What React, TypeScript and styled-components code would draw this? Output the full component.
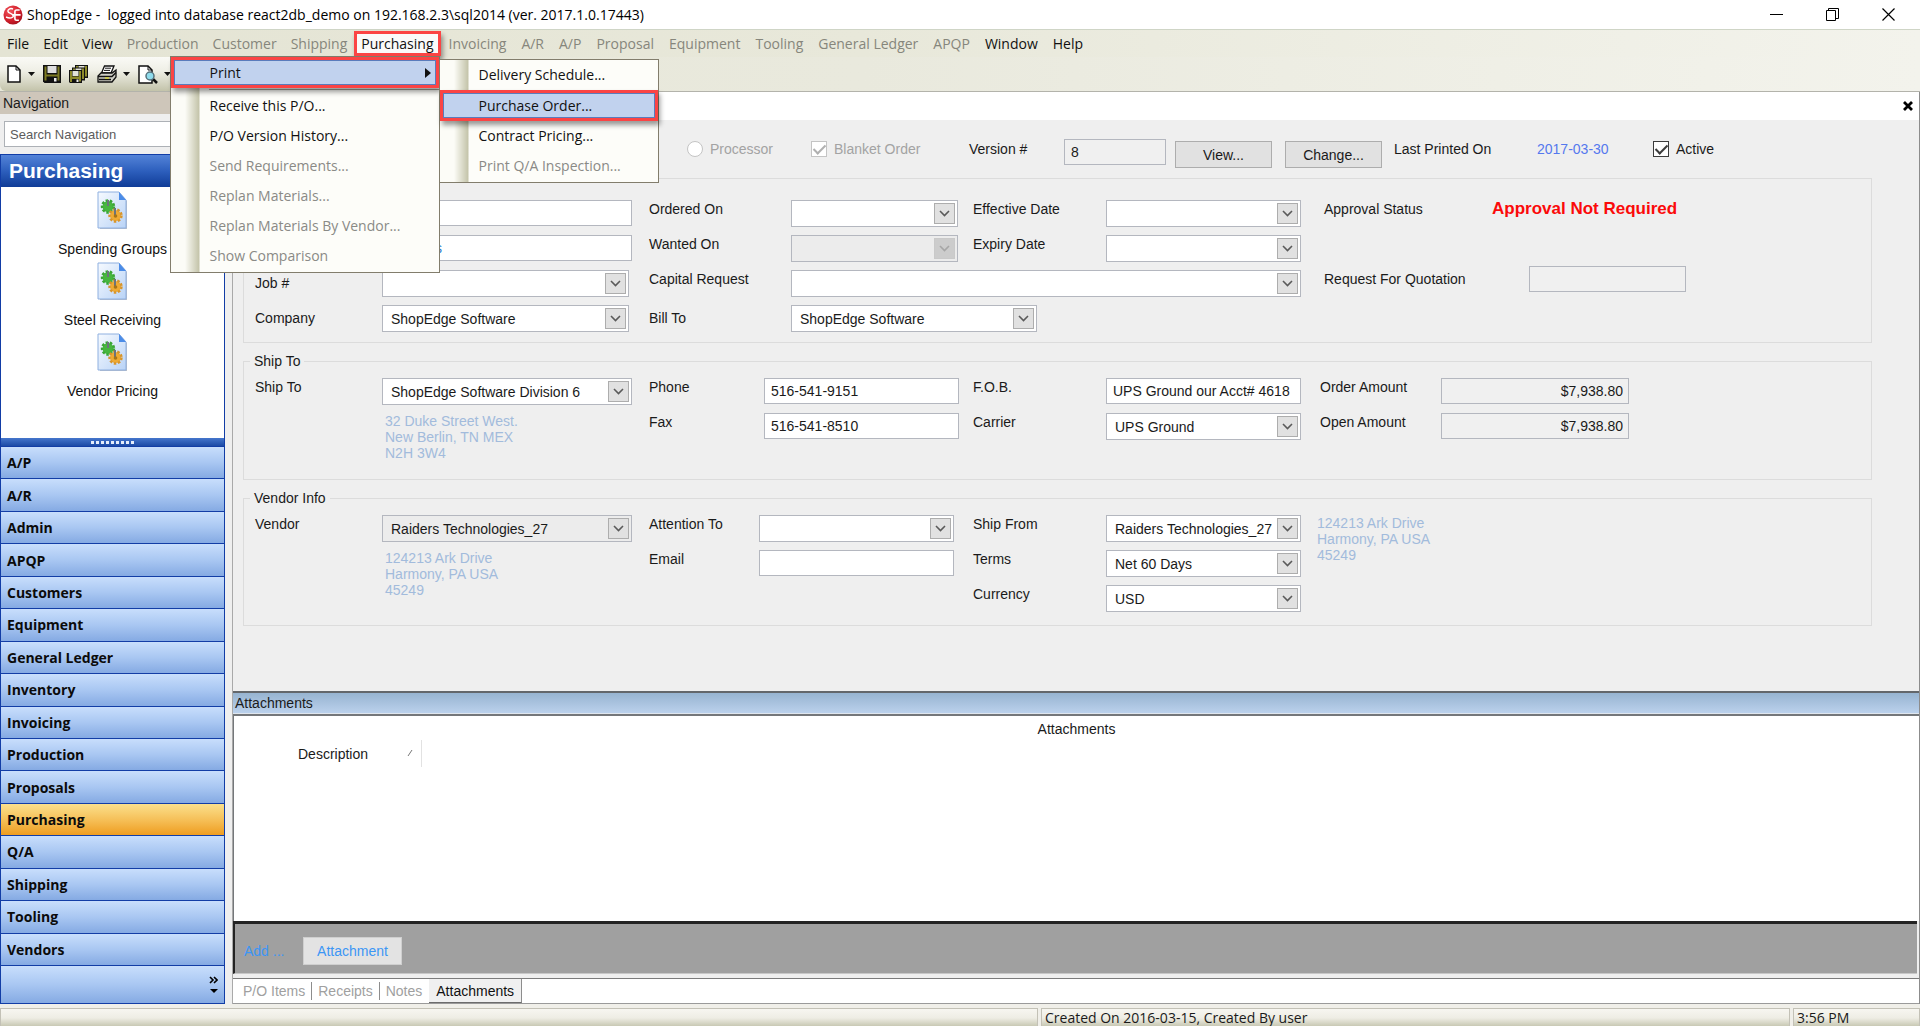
import React from "react";
import styled, { createGlobalStyle, css } from "styled-components";

const uiFont = `"Open Sans", "Noto Sans", sans-serif`;
const formFont = `"Liberation Sans", Arial, sans-serif`;

const GlobalStyle = createGlobalStyle`
  * { box-sizing: border-box; }
  body { margin: 0; background: #efefef; }
  button, input, select { font: inherit; color: inherit; border-radius: 0; margin: 0; }
`;

const Shell = styled.div`
  display: flex;
  flex-direction: column;
  min-height: 100vh;
  font: 14px/18px ${formFont};
  color: #1a1a1a;
  overflow-x: hidden;
`;

/* ---------- title bar ---------- */

const TitleBar = styled.header`
  display: flex;
  align-items: center;
  height: 29px;
  padding: 0 16px 0 3px;
  background: #fff;
  color: #000;
  font-family: ${uiFont};
`;

const Title = styled.h1`
  flex: 1;
  margin: 0 0 0 4px;
  font-size: 14px;
  line-height: 20px;
  font-weight: 400;
  white-space: pre;
`;

const WindowButtons = styled.div`
  display: flex;
  gap: 24px;
`;

const PlainButton = styled.button`
  display: flex;
  align-items: center;
  justify-content: center;
  padding: 0;
  border: 0;
  background: none;
`;

const WindowButton = styled(PlainButton)`
  width: 32px;
  height: 28px;
`;

/* ---------- menu bar ---------- */

const MenuBar = styled.nav`
  display: flex;
  align-items: stretch;
  height: 28px;
  padding: 1px 0;
  border-top: 1px solid #cfd5c6;
  background: linear-gradient(to right, #e4e4d4, #e8e8da 45%, #f3f3ec);
  font: 14px/20px ${uiFont};
`;

const MenuEntry = styled.button<{ $dim?: boolean }>`
  padding: 0 7px;
  border: 0;
  background: none;
  color: ${(p) => (p.$dim ? "#86867c" : "#111")};
  white-space: nowrap;
`;

const WideMenuEntry = styled(MenuEntry)`
  padding-left: 8px;
`;

const OpenEntry = styled.div`
  position: relative;
  display: flex;
  z-index: 5;
`;

const redBox = css`
  border: 3px solid #fb4444;
  box-shadow: 2px 4px 5px rgba(0, 0, 0, 0.4);
`;

const OpenEntryButton = styled(MenuEntry)`
  ${redBox};
  padding: 0 4px;
  background: #fafafa;
`;

const Popup = styled.ul`
  position: absolute;
  margin: 0;
  padding: 0 0 1px;
  list-style: none;
  border: 1px solid #827d6c;
  background: linear-gradient(
    to right,
    #fcfcf7 14px,
    #c4c4aa 28px,
    #fdfdf9 29px
  );
  color: #111;
`;

const PurchasingMenu = styled(Popup)`
  top: 25px;
  right: 1px;
  width: 270px;
`;

const PrintMenu = styled(Popup)`
  top: 2px;
  left: 100%;
  width: 220px;
`;

const MenuRow = styled.li`
  position: relative;
`;

const MenuCommand = styled.button<{ $dim?: boolean; $marked?: boolean }>`
  display: flex;
  align-items: center;
  justify-content: space-between;
  width: 100%;
  height: 30px;
  padding: 0 6px 0 39px;
  border: 0;
  background: none;
  text-align: left;
  white-space: nowrap;
  color: ${(p) => (p.$dim ? "#8a8a86" : "#111")};
  ${(p) =>
    p.$marked &&
    css`
      ${redBox};
      height: 31px;
      padding: 0 5px 0 36px;
      background: #c1d2ee;
      outline: 1px solid #5a7cbc;
      outline-offset: -4px;
    `}
`;

const MenuRule = styled.li`
  height: 1px;
  margin: 1px 0 1px 38px;
  background: #a5a293;
`;

/* ---------- tool bar ---------- */

const ToolArea = styled.div`
  display: flex;
  height: 35px;
  border-bottom: 1px solid #b3b3ab;
  background: linear-gradient(to right, #e7e7d8, #e9e9dd 45%, #f3f3ec);
`;

const ToolStrip = styled.div`
  display: flex;
  align-items: center;
  gap: 8px;
  width: 400px;
  padding-left: 6px;
  border-radius: 0 0 6px 6px;
  background: linear-gradient(#fafaf6, #efefe6 40%, #c3c3aa);
`;

const ToolButton = styled(PlainButton)`
  height: 26px;
  gap: 6px;
`;

/* ---------- workspace ---------- */

const Workspace = styled.div`
  display: flex;
  flex: 1;
  gap: 7px;
`;

const Sidebar = styled.aside`
  display: flex;
  flex-direction: column;
  width: 225px;
  flex: none;
`;

const SidebarCaption = styled.h2`
  margin: 0;
  padding: 2px 3px;
  background: #cec6ba;
  font-size: 14px;
  line-height: 18px;
  font-weight: 400;
`;

const SearchBox = styled.input`
  height: 26px;
  margin: 7px 2px 7px 4px;
  padding: 0 5px;
  border: 1px solid #adb1b6;
  background: #fff;
  font-size: 13px;
  &::placeholder {
    color: #5c5c5c;
    opacity: 1;
  }
`;

const NavPanel = styled.div`
  display: flex;
  flex: 1;
  flex-direction: column;
  border: 1px solid #123da6;
  background: #fff;
`;

const NavTitle = styled.h2`
  margin: 0;
  padding: 4px 8px;
  background: linear-gradient(#5383d8, #2d5fbd 50%, #103c97);
  color: #fff;
  font-size: 21px;
  line-height: 24px;
  font-weight: 700;
`;

const Shortcuts = styled.div`
  display: flex;
  flex-direction: column;
  align-items: center;
  height: 251px;
  padding-top: 4px;
`;

const Shortcut = styled.a`
  display: flex;
  flex-direction: column;
  align-items: center;
  gap: 10px;
  height: 71px;
  color: #111;
  text-decoration: none;
`;

const Grip = styled.div`
  display: flex;
  justify-content: center;
  align-items: center;
  gap: 2px;
  height: 8px;
  background: linear-gradient(#4576cc, #1c4aa6);
`;

const GripDot = styled.i`
  width: 3px;
  height: 3px;
  background: #e6eefb;
`;

const NavList = styled.div`
  display: flex;
  flex: 1;
  flex-direction: column;
`;

const NavItem = styled.button<{ $active?: boolean }>`
  flex: 1;
  padding: 1px 6px 0;
  border: 0;
  border-top: 1px solid #123da6;
  background: ${(p) =>
    p.$active
      ? "linear-gradient(#fbe08c, #f5bd54 55%, #ee9d20)"
      : "linear-gradient(#c8defc, #a9c7f2 50%, #85aae3)"};
  color: #0b0b0b;
  font: 700 14px/20px ${uiFont};
  text-align: left;
`;

const NavFooter = styled.div`
  display: flex;
  justify-content: flex-end;
  align-items: center;
  height: 38px;
  padding: 0 6px;
  border-top: 1px solid #123da6;
  background: linear-gradient(#c8defc, #a9c7f2 50%, #85aae3);
`;

/* ---------- document ---------- */

const Document = styled.main`
  display: flex;
  flex: 1;
  min-width: 0;
  flex-direction: column;
  border-left: 1px solid #a9a9a9;
  border-right: 1px solid #8c8c8c;
`;

const DocumentStrip = styled.div`
  display: flex;
  justify-content: flex-end;
  align-items: center;
  height: 28px;
  padding-right: 5px;
  background: #fff;
`;

const Form = styled.form`
  padding: 19px 47px 65px 10px;
`;

const HeaderRow = styled.div`
  display: grid;
  grid-template-columns: 124px 158px 95px 111px 110px 109px 143px 116px 1fr;
  align-items: start;
  height: 29px;
  padding-left: 444px;
  line-height: 20px;
`;

const Choice = styled.label<{ $dim?: boolean }>`
  display: flex;
  align-items: center;
  gap: 7px;
  color: ${(p) => (p.$dim ? "#a3a3a3" : "inherit")};
  white-space: nowrap;
`;

const Radio = styled.input`
  appearance: none;
  width: 16px;
  height: 16px;
  border: 1px solid #c4c4c4;
  border-radius: 50%;
  background: #fff;
`;

const Tick = styled.input`
  appearance: none;
  display: flex;
  justify-content: center;
  width: 16px;
  height: 16px;
  border: 1px solid #3c3c3c;
  background: #fff;
  color: #3c3c3c;
  &:checked::after {
    content: "";
    width: 5px;
    height: 10px;
    border: solid currentColor;
    border-width: 0 2px 2px 0;
    transform: rotate(45deg);
  }
  &:disabled {
    border-color: #c4c4c4;
    color: #b0b0b0;
  }
`;

const PushButton = styled.button`
  align-self: end;
  width: 97px;
  height: 27px;
  padding: 0;
  border: 1px solid #adadad;
  background: #e1e1e1;
`;

const DateText = styled.output`
  color: #5578ee;
`;

const Group = styled.fieldset`
  min-width: 0;
  margin: 10px 0 0;
  padding: 0;
  border: 1px solid #dcdcdc;
`;

const PlainGroup = styled.section`
  margin-top: 10px;
  padding: 12px 0 2px;
  border: 1px solid #dcdcdc;
`;

const GroupLegend = styled.legend`
  margin-left: 6px;
  padding: 0 4px;
  line-height: 16px;
`;

const FieldGrid = styled.div<{ $columns: string; $rows: string }>`
  display: grid;
  grid-template-columns: ${(p) => p.$columns};
  grid-template-rows: ${(p) => p.$rows};
  align-items: start;
  padding: 9px 0 0 11px;
`;

const FieldLabel = styled.label<{ $middle?: boolean }>`
  line-height: ${(p) => (p.$middle ? 26 : 18)}px;
  white-space: nowrap;
`;

const TextField = styled.input<{ $w: number; $indent?: number }>`
  width: ${(p) => p.$w}px;
  height: 26px;
  padding: 0 5px 0 ${(p) => p.$indent ?? 6}px;
  border: 1px solid #b4b7bf;
  background: #fff;
  outline: 0;
  &:read-only {
    background: #f0f0f0;
  }
`;

const AmountField = styled(TextField)`
  text-align: right;
`;

const LinkField = styled(TextField)`
  color: #2f7fd0;
`;

const PickerFrame = styled.div<{ $w: number; $gray?: boolean; $span?: number }>`
  display: flex;
  width: ${(p) => p.$w}px;
  height: 27px;
  padding: 2px;
  grid-column: span ${(p) => p.$span ?? 1};
  border: 1px solid #b4b7bf;
  background: ${(p) => (p.$gray ? "#ececec" : "#fff")};
`;

const PickerSelect = styled.select`
  appearance: none;
  flex: 1;
  min-width: 0;
  padding: 0 0 0 6px;
  border: 0;
  outline: 0;
  background: none;
  opacity: 1;
`;

const PickerArrow = styled.span<{ $dim?: boolean }>`
  display: flex;
  align-items: center;
  justify-content: center;
  width: 21px;
  border: 1px solid ${(p) => (p.$dim ? "#c9c9c9" : "#adadad")};
  background: ${(p) => (p.$dim ? "#cccccc" : "#e1e1e1")};
  color: ${(p) => (p.$dim ? "#a6a6a6" : "#5a5a5a")};
`;

const Address = styled.address<{ $column: number; $row: number }>`
  grid-column: ${(p) => p.$column};
  grid-row: ${(p) => p.$row} / span 2;
  padding-left: 3px;
  color: #a2bbdc;
  font-style: normal;
  line-height: 16px;
`;

const ApprovalPanel = styled.div`
  display: grid;
  grid-column: 7;
  grid-row: 1 / span 4;
  grid-template-columns: 168px 1fr;
  grid-template-rows: 66px 30px;
  align-items: start;
`;

const ApprovalText = styled.strong`
  color: #fb0a0a;
  font-size: 17px;
  line-height: 18px;
`;

const QuotationCell = styled.div`
  padding-left: 37px;
`;

/* ---------- attachments ---------- */

const PaneCaption = styled.h2`
  margin: 0;
  padding: 0 2px;
  border-top: 2px solid #63676b;
  border-bottom: 1px solid #dfe6ee;
  background: linear-gradient(#97b4d1, #bbd1ec);
  font-size: 14px;
  line-height: 20px;
  font-weight: 400;
`;

const ListArea = styled.div`
  flex: 1;
  border-top: 2px solid #74777a;
  border-left: 1px solid #74777a;
  background: #fff;
`;

const ListTable = styled.table`
  width: 100%;
  border-collapse: collapse;
  caption {
    padding: 4px 0 2px;
    line-height: 18px;
  }
  th {
    height: 27px;
    padding: 0;
    font-weight: 400;
    text-align: left;
  }
`;

const DescriptionHead = styled.th`
  width: 187px;
  border-right: 1px solid #e2e2e2;
`;

const SortHead = styled.div`
  display: flex;
  align-items: center;
  justify-content: space-between;
  padding: 0 8px 0 64px;
`;

const AddBar = styled.div`
  display: flex;
  align-items: center;
  gap: 16px;
  height: 53px;
  margin: 0 2px 4px 0;
  padding: 4px 0 0 9px;
  border-top: 3px solid #232323;
  border-left: 2px solid #232323;
  border-bottom: 1px solid #c8c8c8;
  background: #a0a0a0;
  color: #3c96f5;
`;

const AddLabel = styled.span`
  width: 43px;
`;

const AddButton = styled.button`
  width: 99px;
  height: 28px;
  padding: 0;
  border: 1px solid #cfcfcf;
  background: #e3e3e3;
`;

const Tabs = styled.div`
  display: flex;
  align-items: center;
  height: 26px;
  padding-left: 4px;
  border-top: 1px solid #7b7b7b;
  border-bottom: 1px solid #9a9a9a;
  background: #fff;
`;

const Tab = styled.button<{ $active?: boolean }>`
  height: 18px;
  padding: 0 6px;
  border: 0;
  border-right: 1px solid #8d8d8d;
  background: none;
  color: #a0a0a0;
  line-height: 18px;
  &:nth-last-child(2) {
    border-color: transparent;
  }
  ${(p) =>
    p.$active &&
    css`
      align-self: stretch;
      height: auto;
      padding: 0 7px;
      border-bottom: 1px solid #6c6c6c;
      background: #f0f0f0;
      color: #111;
    `}
`;

/* ---------- status bar ---------- */

const StatusBar = styled.footer`
  display: grid;
  grid-template-columns: 1fr 749px 127px;
  gap: 3px;
  height: 22px;
  padding-top: 4px;
  background: #f0efe9;
  font: 14px/18px ${uiFont};
`;

const StatusCell = styled.div`
  padding: 0 3px;
  border: solid #c3c1b6;
  border-width: 1px 1px 0 1px;
  background: linear-gradient(#f7f6f1, #eeede4 50%, #c4c4ae);
  white-space: nowrap;
`;

/* ---------- drawings ---------- */

const Logo = () => (
  <svg width="20" height="20" viewBox="0 0 21 21" aria-hidden="true">
    <defs>
      <radialGradient id="ball" cx="0.35" cy="0.3" r="0.8">
        <stop offset="0" stopColor="#f0545c" />
        <stop offset="0.6" stopColor="#d3202c" />
        <stop offset="1" stopColor="#9c0f1a" />
      </radialGradient>
    </defs>
    <circle cx="10.5" cy="10.5" r="10" fill="url(#ball)" />
    <path
      d="M10.500 4.200C7.500 3 4.600 4.600 5.200 6.800c.6 2.200 5 2 5.600 4.400.5 2.400-3.800 3.200-7.600 1.400"
      fill="none"
      stroke="#fff"
      strokeWidth="1.500"
    />
    <path
      d="M17.500 5.200h-3.200c-1.200 0-1.800.7-1.800 1.800v7.200c0 1.200.7 1.800 1.800 1.800h2.400M9.800 10.400h8.700"
      fill="none"
      stroke="#fff"
      strokeWidth="1.700"
    />
  </svg>
);

const Drop = () => (
  <svg width="7" height="4" viewBox="0 0 7 4" aria-hidden="true">
    <path d="M0 0h7L3.500 4z" fill="#111" />
  </svg>
);

const NewIcon = () => (
  <svg width="16" height="18" viewBox="0 0 16 18" aria-hidden="true">
    <path d="M2 1h8l4 4v12H2z" fill="#fff" stroke="#111" strokeWidth="1.500" />
    <path d="M10 1v4h4" fill="none" stroke="#111" />
  </svg>
);

const SaveIcon = () => (
  <svg width="18" height="18" viewBox="0 0 18 18" aria-hidden="true">
    <path d="M0 0h18v18H1.500L0 16.500z" fill="#111" />
    <path d="M1.500 1.500h2v8h11v-8h2v14h-2v-4h-11v4h-2z" fill="#7d7a22" />
    <path d="M4.500 1h9v7h-9z" fill="#dedede" />
    <path d="M11 13h2.500v3.500H11z" fill="#eee" />
  </svg>
);

const SaveAllIcon = () => (
  <svg width="20" height="18" viewBox="0 0 20 18" aria-hidden="true">
    {[
      [6, 0],
      [3, 2.5],
      [0, 5],
    ].map(([x, y]) => (
      <g key={x} transform={`translate(${x} ${y})`}>
        <path d="M0 0h13v13H1l-1-1z" fill="#111" />
        <path d="M1 1h2v5.500h7V1h2v10.500h-2V9H3v3H1z" fill="#8d8a2a" />
        <path d="M3.500 1h6v5h-6z" fill="#e2e2d8" />
        <path d="M7.500 9.500h2V12h-2z" fill="#eee" />
      </g>
    ))}
  </svg>
);

const PrinterIcon = () => (
  <svg width="20" height="18" viewBox="0 0 20 18" aria-hidden="true">
    <path d="M7.500 1h9.500l-3 7H4.500z" fill="#fff" stroke="#111" strokeWidth="1.300" />
    <path d="M8 3.200h6M7 5.400h6" stroke="#111" />
    <path d="M4 8h11l4-3v7l-4 5H1v-6z" fill="#cfcfc6" stroke="#111" strokeWidth="1.300" />
    <path d="M1 11.500h14l4-4M2 14.500h12" fill="none" stroke="#111" strokeWidth="1.500" />
    <path d="M8 13h4" stroke="#d6d33a" strokeWidth="1.500" />
  </svg>
);

const PreviewIcon = () => (
  <svg width="20" height="19" viewBox="0 0 20 19" aria-hidden="true">
    <path d="M1 1h9l4 4v13H1z" fill="#fff" stroke="#111" strokeWidth="1.500" />
    <path d="M10 1v4h4" fill="none" stroke="#111" />
    <path d="M15 14l4 4" stroke="#111" strokeWidth="2.500" />
    <circle cx="12" cy="11" r="4" fill="#8fdcec" stroke="#55707a" strokeWidth="1.500" />
  </svg>
);

const PageGearsIcon = () => (
  <svg width="31" height="39" viewBox="0 0 31 39" aria-hidden="true">
    <defs>
      <linearGradient id="sheet" x1="0" y1="0" x2="1" y2="1">
        <stop offset="0" stopColor="#f6faff" />
        <stop offset="1" stopColor="#b9d3f6" />
      </linearGradient>
    </defs>
    <path d="M3 2h20l7 8v28H3z" fill="#8a93a3" opacity="0.6" />
    <path d="M1 1h21l7 8v28H1z" fill="url(#sheet)" stroke="#8fb0e0" />
    <path d="M22 1l7 8h-7z" fill="#4b8ce8" />
    <circle cx="11" cy="15.500" r="5.500" fill="#46b63f" />
    <circle
      cx="11"
      cy="15.500"
      r="6"
      fill="none"
      stroke="#3aa634"
      strokeWidth="2.400"
      strokeDasharray="2.500 1.690"
    />
    <circle cx="18.500" cy="24.500" r="5.500" fill="#eeaa33" />
    <circle
      cx="18.500"
      cy="24.500"
      r="6"
      fill="none"
      stroke="#d8952a"
      strokeWidth="2.400"
      strokeDasharray="2.500 1.690"
    />
    <path d="M11 9v6M18 17v7" stroke="#6b747c" strokeWidth="2" />
    <circle cx="18.500" cy="25" r="1.800" fill="#a5741a" />
  </svg>
);

const Chevron = () => (
  <svg width="11" height="7" viewBox="0 0 11 7" aria-hidden="true">
    <path d="M1 1l4.500 4.500L10 1" fill="none" stroke="currentColor" strokeWidth="1.600" />
  </svg>
);

/* ---------- small composites ---------- */

type PickerProps = {
  id: string;
  w: number;
  value?: string;
  gray?: boolean;
  disabled?: boolean;
  span?: number;
};

const Picker = ({ id, w, value = "", gray, disabled, span }: PickerProps) => (
  <PickerFrame $w={w} $gray={gray || disabled} $span={span}>
    <PickerSelect id={id} defaultValue={value} disabled={disabled}>
      <option>{value}</option>
    </PickerSelect>
    <PickerArrow $dim={disabled}>
      <Chevron />
    </PickerArrow>
  </PickerFrame>
);

const leadingMenus: [string, boolean][] = [
  ["File", false],
  ["Edit", false],
  ["View", false],
  ["Production", true],
  ["Customer", true],
  ["Shipping", true],
];

const trailingMenus: [string, boolean][] = [
  ["Invoicing", true],
  ["A/R", true],
  ["A/P", true],
  ["Proposal", true],
  ["Equipment", true],
  ["Tooling", true],
  ["General Ledger", true],
  ["APQP", true],
  ["Window", false],
  ["Help", false],
];

const purchasingCommands: [string, boolean][] = [
  ["Receive this P/O...", false],
  ["P/O Version History...", false],
  ["Send Requirements...", true],
  ["Replan Materials...", true],
  ["Replan Materials By Vendor...", true],
  ["Show Comparison", true],
];

const modules = [
  "A/P",
  "A/R",
  "Admin",
  "APQP",
  "Customers",
  "Equipment",
  "General Ledger",
  "Inventory",
  "Invoicing",
  "Production",
  "Proposals",
  "Purchasing",
  "Q/A",
  "Shipping",
  "Tooling",
  "Vendors",
];

export default function App() {
  return (
    <Shell>
      <GlobalStyle />
      <TitleBar>
        <Logo />
        <Title>
          {"ShopEdge -  logged into database react2db_demo on 192.168.2.3\\sql2014 (ver. 2017.1.0.17443)"}
        </Title>
        <WindowButtons>
          <WindowButton aria-label="Minimize">
            <svg width="13" height="13" viewBox="0 0 13 13">
              <path d="M0 6.500h13" stroke="#000" />
            </svg>
          </WindowButton>
          <WindowButton aria-label="Restore">
            <svg width="13" height="13" viewBox="0 0 13 13">
              <path d="M.5 2.500h9v10h-9zM2.500 2.500v-2h10v10h-3" fill="none" stroke="#000" />
            </svg>
          </WindowButton>
          <WindowButton aria-label="Close">
            <svg width="13" height="13" viewBox="0 0 13 13">
              <path d="M.5.5l12 12M12.500.5l-12 12" stroke="#000" strokeWidth="1.200" />
            </svg>
          </WindowButton>
        </WindowButtons>
      </TitleBar>

      <MenuBar>
        {leadingMenus.map(([name, dim]) => (
          <MenuEntry key={name} $dim={dim}>
            {name}
          </MenuEntry>
        ))}
        <OpenEntry>
          <OpenEntryButton>Purchasing</OpenEntryButton>
          <PurchasingMenu>
            <MenuRow>
              <MenuCommand $marked>
                Print
                <svg width="6" height="10" viewBox="0 0 6 10" aria-hidden="true">
                  <path d="M0 0l6 5-6 5z" fill="#111" />
                </svg>
              </MenuCommand>
              <PrintMenu>
                <MenuRow>
                  <MenuCommand>Delivery Schedule...</MenuCommand>
                </MenuRow>
                <MenuRow>
                  <MenuCommand $marked>Purchase Order...</MenuCommand>
                </MenuRow>
                <MenuRow>
                  <MenuCommand>Contract Pricing...</MenuCommand>
                </MenuRow>
                <MenuRow>
                  <MenuCommand $dim>Print Q/A Inspection...</MenuCommand>
                </MenuRow>
              </PrintMenu>
            </MenuRow>
            <MenuRule />
            {purchasingCommands.map(([name, dim]) => (
              <MenuRow key={name}>
                <MenuCommand $dim={dim}>{name}</MenuCommand>
              </MenuRow>
            ))}
          </PurchasingMenu>
        </OpenEntry>
        {trailingMenus.map(([name, dim]) => (
          <WideMenuEntry key={name} $dim={dim}>
            {name}
          </WideMenuEntry>
        ))}
      </MenuBar>

      <ToolArea>
        <ToolStrip>
          <ToolButton aria-label="New">
            <NewIcon />
            <Drop />
          </ToolButton>
          <ToolButton aria-label="Save">
            <SaveIcon />
          </ToolButton>
          <ToolButton aria-label="Save all">
            <SaveAllIcon />
          </ToolButton>
          <ToolButton aria-label="Print">
            <PrinterIcon />
            <Drop />
          </ToolButton>
          <ToolButton aria-label="Preview">
            <PreviewIcon />
            <Drop />
          </ToolButton>
        </ToolStrip>
      </ToolArea>

      <Workspace>
        <Sidebar>
          <SidebarCaption>Navigation</SidebarCaption>
          <SearchBox placeholder="Search Navigation" aria-label="Search Navigation" />
          <NavPanel>
            <NavTitle>Purchasing</NavTitle>
            <Shortcuts>
              {["Spending Groups", "Steel Receiving", "Vendor Pricing"].map((name) => (
                <Shortcut key={name} href="#">
                  <PageGearsIcon />
                  {name}
                </Shortcut>
              ))}
            </Shortcuts>
            <Grip>
              {Array.from({ length: 9 }, (_, i) => (
                <GripDot key={i} />
              ))}
            </Grip>
            <NavList>
              {modules.map((name) => (
                <NavItem key={name} $active={name === "Purchasing"}>
                  {name}
                </NavItem>
              ))}
            </NavList>
            <NavFooter>
              <PlainButton aria-label="Configure buttons">
                <svg width="9" height="18" viewBox="0 0 9 18">
                  <path d="M1 1l3 3-3 3M5 1l3 3-3 3" fill="none" stroke="#000" strokeWidth="1.600" />
                  <path d="M1 13h8l-4 4z" fill="#000" />
                </svg>
              </PlainButton>
            </NavFooter>
          </NavPanel>
        </Sidebar>

        <Document>
          <DocumentStrip>
            <PlainButton aria-label="Close document">
              <svg width="12" height="10" viewBox="0 0 12 10">
                <path d="M2 1l8 8M10 1L2 9" stroke="#000" strokeWidth="2.800" />
              </svg>
            </PlainButton>
          </DocumentStrip>

          <Form>
            <HeaderRow>
              <Choice $dim>
                <Radio type="radio" disabled />
                Processor
              </Choice>
              <Choice $dim>
                <Tick type="checkbox" defaultChecked disabled />
                Blanket Order
              </Choice>
              <label htmlFor="version">Version #</label>
              <TextField id="version" $w={102} readOnly defaultValue="8" />
              <PushButton type="button">View...</PushButton>
              <PushButton type="button">Change...</PushButton>
              <span>Last Printed On</span>
              <DateText>2017-03-30</DateText>
              <Choice>
                <Tick type="checkbox" defaultChecked />
                Active
              </Choice>
            </HeaderRow>

            <PlainGroup>
              <FieldGrid
                $columns="127px 267px 142px 182px 133px 218px 1fr"
                $rows="35px 35px 35px 35px"
              >
                <span />
                <TextField $w={250} aria-label="Order number" />
                <FieldLabel htmlFor="ordered">Ordered On</FieldLabel>
                <Picker id="ordered" w={167} />
                <FieldLabel htmlFor="effective">Effective Date</FieldLabel>
                <Picker id="effective" w={195} />
                <ApprovalPanel>
                  <span>Approval Status</span>
                  <ApprovalText>Approval Not Required</ApprovalText>
                  <FieldLabel htmlFor="quotation" $middle>
                    Request For Quotation
                  </FieldLabel>
                  <QuotationCell>
                    <TextField id="quotation" $w={157} readOnly />
                  </QuotationCell>
                </ApprovalPanel>

                <span />
                <LinkField $w={250} $indent={52} aria-label="Requested by" defaultValue="s" />
                <FieldLabel htmlFor="wanted">Wanted On</FieldLabel>
                <Picker id="wanted" w={167} disabled />
                <FieldLabel htmlFor="expiry">Expiry Date</FieldLabel>
                <Picker id="expiry" w={195} />

                <FieldLabel htmlFor="job" $middle>
                  Job #
                </FieldLabel>
                <Picker id="job" w={247} />
                <FieldLabel htmlFor="capital">Capital Request</FieldLabel>
                <Picker id="capital" w={510} span={3} />

                <FieldLabel htmlFor="company" $middle>
                  Company
                </FieldLabel>
                <Picker id="company" w={247} value="ShopEdge Software" />
                <FieldLabel htmlFor="bill" $middle>
                  Bill To
                </FieldLabel>
                <Picker id="bill" w={246} value="ShopEdge Software" span={3} />
              </FieldGrid>
            </PlainGroup>

            <Group>
              <GroupLegend>Ship To</GroupLegend>
              <FieldGrid
                $columns="127px 267px 115px 209px 133px 214px 121px 1fr"
                $rows="35px 35px 31px"
              >
                <FieldLabel htmlFor="ship">Ship To</FieldLabel>
                <Picker id="ship" w={250} value="ShopEdge Software Division 6" />
                <FieldLabel htmlFor="phone">Phone</FieldLabel>
                <TextField id="phone" $w={195} defaultValue="516-541-9151" />
                <FieldLabel htmlFor="fob">F.O.B.</FieldLabel>
                <TextField id="fob" $w={195} defaultValue="UPS Ground our Acct# 4618" />
                <FieldLabel htmlFor="orderAmount">Order Amount</FieldLabel>
                <AmountField id="orderAmount" $w={188} readOnly defaultValue="$7,938.80" />

                <span />
                <Address $column={2} $row={2}>
                  32 Duke Street West.
                  <br />
                  New Berlin, TN MEX
                  <br />
                  N2H 3W4
                </Address>
                <FieldLabel htmlFor="fax">Fax</FieldLabel>
                <TextField id="fax" $w={195} defaultValue="516-541-8510" />
                <FieldLabel htmlFor="carrier">Carrier</FieldLabel>
                <Picker id="carrier" w={195} value="UPS Ground" />
                <FieldLabel htmlFor="openAmount">Open Amount</FieldLabel>
                <AmountField id="openAmount" $w={188} readOnly defaultValue="$7,938.80" />
              </FieldGrid>
            </Group>

            <Group>
              <GroupLegend>Vendor Info</GroupLegend>
              <FieldGrid
                $columns="127px 267px 110px 214px 133px 208px 1fr"
                $rows="35px 35px 40px"
              >
                <FieldLabel htmlFor="vendor">Vendor</FieldLabel>
                <Picker id="vendor" w={250} value="Raiders Technologies_27" gray />
                <FieldLabel htmlFor="attention">Attention To</FieldLabel>
                <Picker id="attention" w={195} />
                <FieldLabel htmlFor="from">Ship From</FieldLabel>
                <Picker id="from" w={195} value="Raiders Technologies_27" />
                <Address $column={7} $row={1}>
                  124213 Ark Drive
                  <br />
                  Harmony, PA USA
                  <br />
                  45249
                </Address>

                <span />
                <Address $column={2} $row={2}>
                  124213 Ark Drive
                  <br />
                  Harmony, PA USA
                  <br />
                  45249
                </Address>
                <FieldLabel htmlFor="email">Email</FieldLabel>
                <TextField id="email" $w={195} />
                <FieldLabel htmlFor="terms">Terms</FieldLabel>
                <Picker id="terms" w={195} value="Net 60 Days" />

                <span />
                <span />
                <span />
                <FieldLabel htmlFor="currency">Currency</FieldLabel>
                <Picker id="currency" w={195} value="USD" />
              </FieldGrid>
            </Group>
          </Form>

          <PaneCaption>Attachments</PaneCaption>
          <ListArea>
            <ListTable>
              <caption>Attachments</caption>
              <thead>
                <tr>
                  <DescriptionHead scope="col">
                    <SortHead>
                      Description
                      <svg width="6" height="9" viewBox="0 0 6 9" aria-hidden="true">
                        <path d="M1 7l4-6" stroke="#777" />
                      </svg>
                    </SortHead>
                  </DescriptionHead>
                  <td />
                </tr>
              </thead>
            </ListTable>
          </ListArea>
          <AddBar>
            <AddLabel>Add ...</AddLabel>
            <AddButton type="button">Attachment</AddButton>
          </AddBar>
          <Tabs>
            <Tab>P/O Items</Tab>
            <Tab>Receipts</Tab>
            <Tab>Notes</Tab>
            <Tab $active>Attachments</Tab>
          </Tabs>
        </Document>
      </Workspace>

      <StatusBar>
        <StatusCell />
        <StatusCell>Created On 2016-03-15, Created By user</StatusCell>
        <StatusCell>3:56 PM</StatusCell>
      </StatusBar>
    </Shell>
  );
}
